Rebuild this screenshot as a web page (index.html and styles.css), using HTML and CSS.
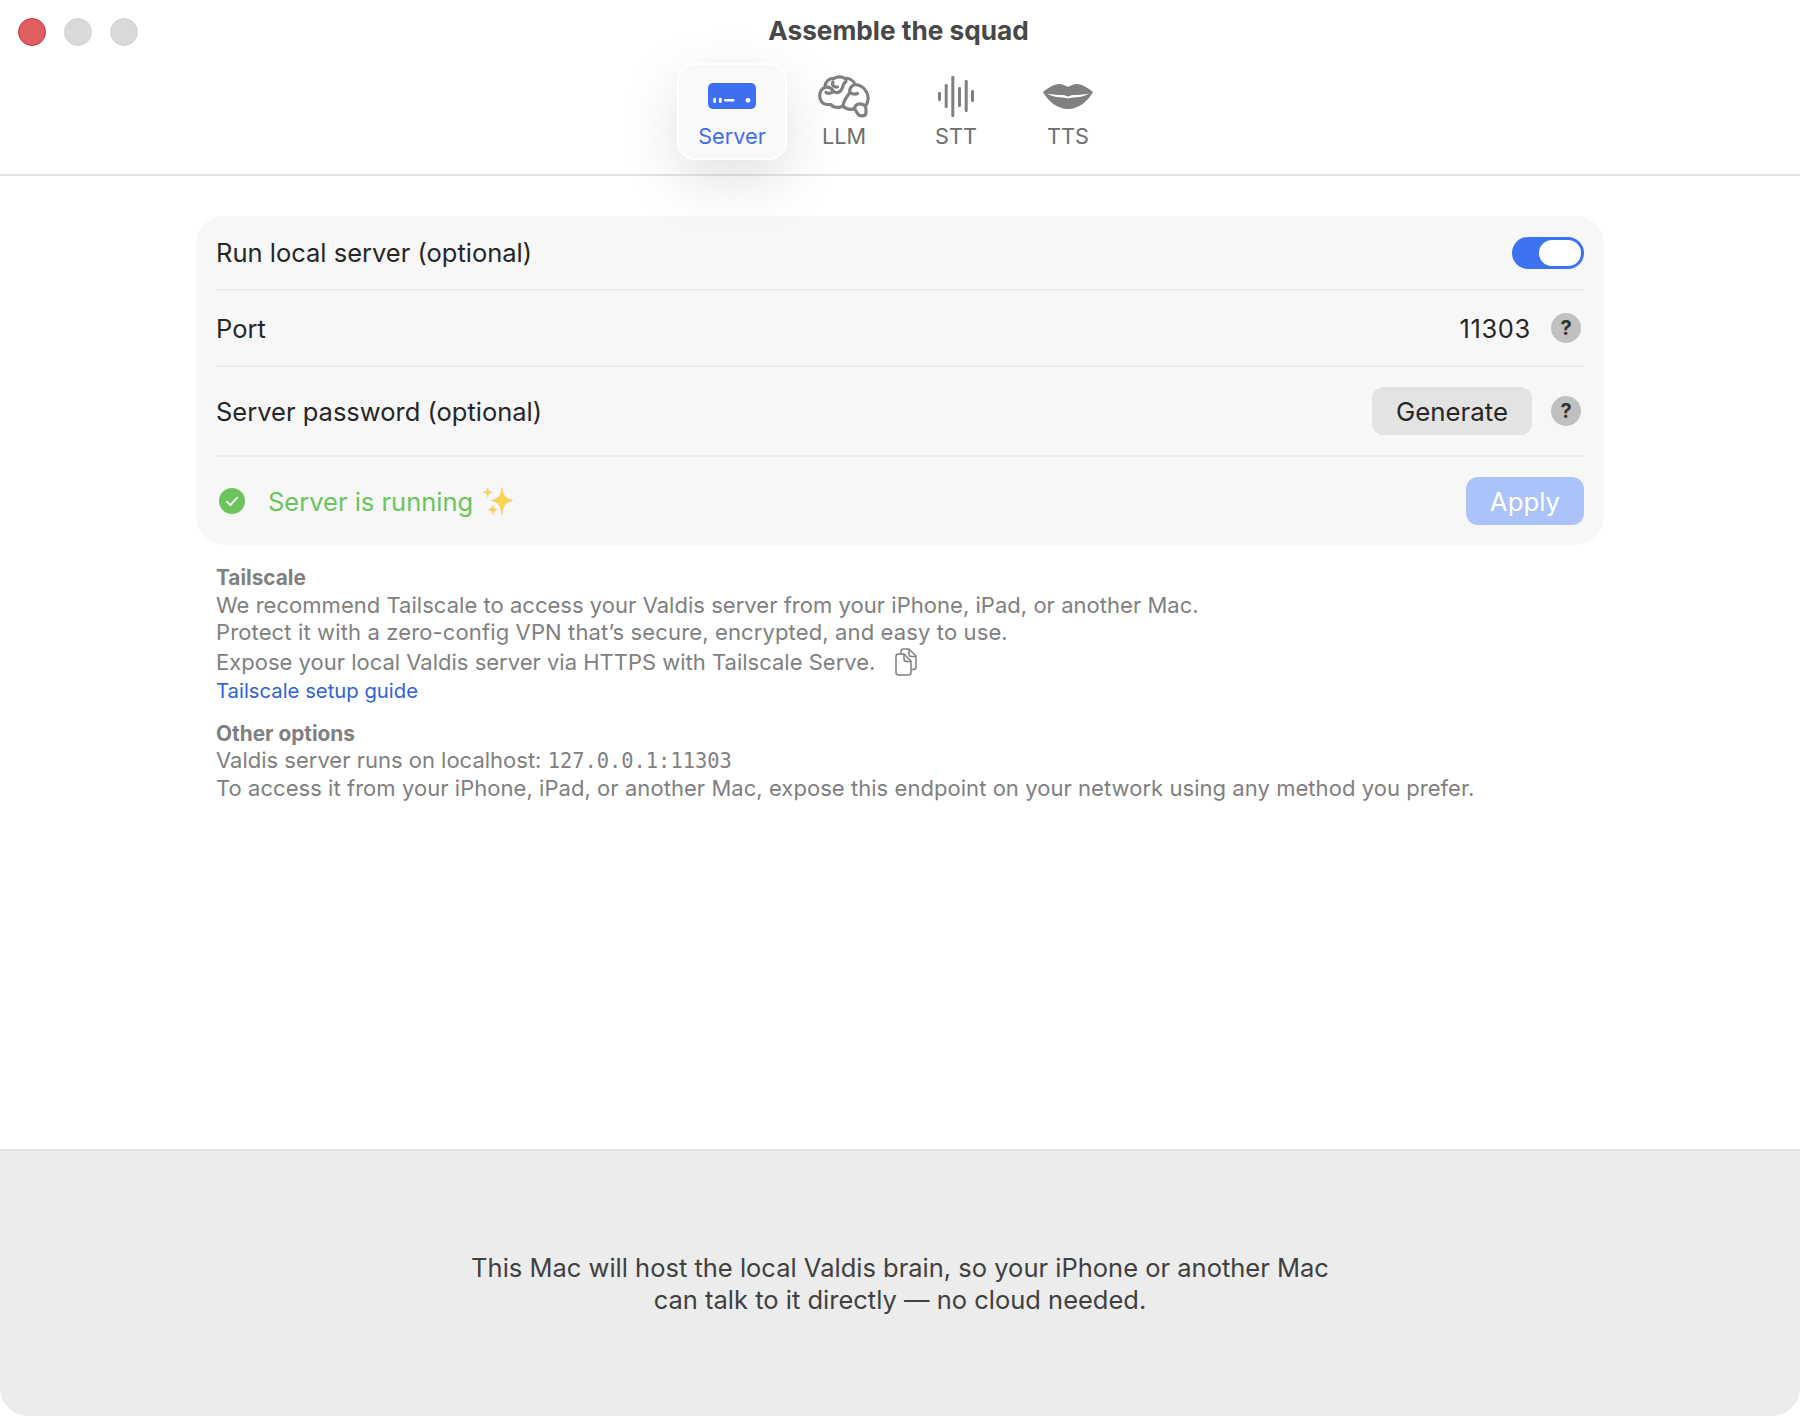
FILE: index.html
```html
<!DOCTYPE html>
<html lang="en">
<head>
<meta charset="utf-8">
<title>Assemble the squad</title>
<link rel="stylesheet" href="styles.css">
</head>
<body>
<div class="window">
  <header class="header">
    <div class="traffic">
      <span class="light light-close"></span>
      <span class="light"></span>
      <span class="light"></span>
    </div>
    <h1 class="title">Assemble the squad</h1>
    <nav class="tabs">
      <div class="tab tab-active">
        <svg class="tab-icon icon-server" width="48" height="26" viewBox="0 0 48 26"><rect width="48" height="26" rx="5" fill="#3d6ff0"/><g fill="#fff"><rect x="5.300" y="14.700" width="2.700" height="5.400" rx="1.300"/><rect x="11" y="14.700" width="2.700" height="5.400" rx="1.300"/><rect x="16" y="16" width="10.400" height="2.400" rx="1.200"/><circle cx="40" cy="17.300" r="2.400"/></g></svg>
        <span>Server</span>
      </div>
      <div class="tab">
        <svg class="tab-icon icon-brain" width="52" height="43" viewBox="0 0 52 43" fill="none" stroke="#808080" stroke-width="3.200" stroke-linecap="round" stroke-linejoin="round"><path d="M9 29.500C4 29.500 1.600 25 1.700 20.500 1.800 16 4 13.500 7 12.500 6.500 7.500 11 3 16 3.500 19 1.200 24 1.200 27 3.500 31.500 3 35.500 5.500 37 9.500 42 10 46.500 13 48.500 17 50.800 21 50.800 27 47.500 31 48 34 48.500 37.500 47.500 39.500 45.500 41.500 41.500 41.500 39.500 38.500L36.500 33.500C32.500 35 28 34 25 31 21 33 15.500 33 13 29.500z"/><path d="M7 12.500C10 11.500 14 13 15.500 16.500 13 18.500 10 18.500 8 17.500M15 7C13.500 10 15.500 12.500 19.500 12"/><path d="M28 6.500C24.500 8 25.500 13 22.500 16 20 18.500 18 18 15.500 16.500"/><path d="M37 9.500C33 10.500 31 14 32 17.500 30 20.500 26 24 25 31"/><path d="M32 17.500C34 19 37 19.500 39.500 18.500"/><path d="M36.500 33.500C37 29.500 41.500 27 47.500 31"/></svg>
        <span>LLM</span>
      </div>
      <div class="tab">
        <svg class="tab-icon icon-stt" width="36" height="41" viewBox="0 0 36 41" fill="#808080"><rect x="0" y="16" width="3" height="9" rx="1.200"/><rect x="6.700" y="8" width="3" height="24" rx="1.200"/><rect x="13.300" y="0" width="3" height="41" rx="1.200"/><rect x="20" y="11" width="3" height="20" rx="1.200"/><rect x="26.700" y="4" width="3" height="32" rx="1.200"/><rect x="33" y="14" width="3" height="12" rx="1.200"/></svg>
        <span>STT</span>
      </div>
      <div class="tab">
        <svg class="tab-icon icon-lips" width="50" height="25" viewBox="0 0 50 25"><path fill="#808080" d="M0 8C5 4 11 0 16 0 20 0 23 2 25 3 27 2 30 0 34 0 39 0 45 4 50 8 45 17 36 25 25 25 14 25 5 17 0 8z"/><path fill="#fff" d="M4 9.500C10 10.500 16 11 20 11 22 11 24 12.500 25 12.500 26 12.500 28 11 30 11 34 11 40 10.500 46 9.500 41 12.500 35 13.500 30 13.500 28 13.500 26 14.500 25 14.500 24 14.500 22 13.500 20 13.500 15 13.500 9 12.500 4 9.500z"/></svg>
        <span>TTS</span>
      </div>
    </nav>
  </header>
  <main class="main">
    <section class="card">
      <div class="row row-first">
        <span>Run local server (optional)</span>
        <span class="switch"><span class="knob"></span></span>
      </div>
      <div class="row row-port">
        <span>Port</span>
        <div class="controls"><span class="port-value">11303</span><span class="help">?</span></div>
      </div>
      <div class="row row-tall">
        <span>Server password (optional)</span>
        <div class="controls"><span class="btn">Generate</span><span class="help">?</span></div>
      </div>
      <div class="row row-status">
        <div class="status">
          <svg class="status-check" width="26" height="26" viewBox="0 0 26 26"><circle cx="13" cy="13" r="13" fill="#6cc45d"/><path d="M7.800 13.600l3.600 3.600 6.800-7.600" fill="none" stroke="#fff" stroke-width="1.800" stroke-linecap="round" stroke-linejoin="round"/></svg>
          <span class="status-text">Server is running</span>
          <svg width="30" height="28" viewBox="0 0 30 28"><g fill="#fcd54f" stroke="#f7bd4a" stroke-width=".6" stroke-linejoin="round"><path d="M19 .5C19.800 8 21.500 11.500 29.500 13.500 21.500 15.500 19.800 19 19 27.500 18.200 19 16.500 15.500 8.500 13.500 16.500 11.500 18.200 8 19 .5z"/><path d="M4.700 1C5.100 3.500 5.900 4.500 9 5.300 5.900 6.100 5.100 7.100 4.700 9.800 4.300 7.100 3.500 6.100.4 5.300 3.500 4.500 4.300 3.500 4.700 1z"/><path d="M9.700 18.400C10.100 20.900 10.900 21.900 14 22.700 10.900 23.500 10.100 24.500 9.700 27.200 9.300 24.500 8.500 23.500 5.400 22.700 8.500 21.900 9.300 20.900 9.700 18.400z"/></g></svg>
        </div>
        <span class="btn btn-apply">Apply</span>
      </div>
    </section>
    <section class="notes">
      <div class="note">
        <div class="note-title">Tailscale</div>
        <div class="note-line note-first">We recommend Tailscale to access your Valdis server from your iPhone, iPad, or another Mac.</div>
        <div class="note-line note-wide">Protect it with a zero-config VPN that’s secure, encrypted, and easy to use.</div>
        <div class="note-line note-copy">Expose your local Valdis server via HTTPS with Tailscale Serve.
          <svg class="copy" width="22" height="28" viewBox="0 0 22 28" fill="none" stroke="#808080" stroke-width="1.500" stroke-linejoin="round"><path d="M6 6V3.500C6 2 7 1 8.500 1H14l7 7v11c0 1.500-1 2.500-2.500 2.500H16"/><path d="M14 1v5c0 1.500 1 2.500 2.500 2.500H21"/><path d="M3.500 6H9l7 7v11.500c0 1.500-1 2.500-2.500 2.500h-10C2 27 1 26 1 24.500v-16C1 7 2 6 3.500 6z"/><path d="M9 6v5c0 1.500 1 2.500 2.500 2.500H16"/></svg>
        </div>
        <a class="note-link" href="#">Tailscale setup guide</a>
      </div>
      <div class="note">
        <div class="note-title">Other options</div>
        <div class="note-line">Valdis server runs on localhost: <span class="mono">127.0.0.1:11303</span></div>
        <div class="note-line note-slight">To access it from your iPhone, iPad, or another Mac, expose this endpoint on your network using any method you prefer.</div>
      </div>
    </section>
  </main>
  <footer class="footer">
    <p>This Mac will host the local Valdis brain, so your iPhone or another Mac<br>can talk to it directly — no cloud needed.</p>
  </footer>
</div>
</body>
</html>
```
FILE: styles.css
```css
* { box-sizing: border-box; }
html, body { margin: 0; padding: 0; background: #fff; }
body { font-family: Inter, "Liberation Sans", sans-serif; color: #262626; }
.window { width: 1800px; height: 1416px; display: flex; flex-direction: column; overflow: hidden; }
.header { position: relative; height: 176px; border-bottom: 2px solid #e4e4e4; display: flex; flex-direction: column; align-items: center; flex-shrink: 0; }
.traffic { position: absolute; left: 18px; top: 18px; display: flex; gap: 18px; }
.light { width: 28px; height: 28px; border-radius: 50%; background: #d9d9d9; border: 1px solid #d2d2d2; }
.light-close { background: #e05f63; border-color: #d8343c; }
.title { margin: 14px 0 0 -3px; font-size: 26.200px; line-height: 34px; font-weight: 700; color: #484848; }
.tabs { display: flex; gap: 2px; margin-top: 15px; position: relative; }
.tab { width: 110px; height: 97px; display: flex; flex-direction: column; align-items: center; justify-content: flex-end; padding-bottom: 8px; font-size: 21.700px; line-height: 28px; color: #6e6e6e; border-radius: 18px; border: 2px solid transparent; position: relative; }
.tab-icon { position: absolute; left: 50%; transform: translateX(-50%); }
.icon-server { top: 18px; }
.icon-brain { top: 10px; }
.icon-stt { top: 11px; }
.icon-lips { top: 19px; }
.tab-active { color: #3d6ff0; background: #f9f9f9; border-color: #fff; box-shadow: 0 20px 60px rgba(0,0,0,.12); }
.main { flex: 1; padding: 40px 196px 0; }
.card { background: #f7f7f7; border-radius: 28px; padding: 0 20px; }
.row { display: flex; align-items: center; justify-content: space-between; font-size: 25.500px; color: #262626; border-bottom: 2px solid #ececec; }
.row-first { height: 75px; }
.row-port { height: 76px; }
.row-tall { height: 90px; }
.row-status { height: 88px; border-bottom: 0; }
.controls { display: flex; align-items: center; gap: 19px; padding-right: 3px; }
.port-value { letter-spacing: .64px; margin-right: 1px; }
.switch { width: 72px; height: 32px; border-radius: 16px; background: #3d72f2; padding: 3px; display: flex; justify-content: flex-end; }
.knob { width: 42px; height: 26px; border-radius: 13px; background: #fff; }
.help { width: 30px; height: 30px; border-radius: 50%; background: #c0c0c0; color: #333; font-size: 20px; font-weight: 700; display: flex; align-items: center; justify-content: center; }
.btn { height: 48px; width: 160px; border-radius: 12px; background: #e3e3e3; display: flex; align-items: center; justify-content: center; font-size: 25.800px; }
.btn-apply { width: 118px; background: #abc3f8; color: #fff; }
.status { display: flex; align-items: center; }
.status-check { margin-left: 3px; }
.status-text { color: #6cc45d; margin: 0 10px 0 23px; }
.notes { padding: 19px 20px 0; color: #808080; font-size: 22px; line-height: 27.500px; }
.note { margin-bottom: 15px; }
.note-title { font-weight: 700; font-size: 20.800px; }
.note-first { letter-spacing: .03px; }
.note-wide { letter-spacing: .13px; }
.note-slight { letter-spacing: .05px; }
.note-copy { display: flex; align-items: center; gap: 20px; height: 27.500px; margin: 2px 0 1px; }
.copy { flex-shrink: 0; }
.note-link { color: #2f62d8; text-decoration: none; font-size: 20.300px; display: block; }
.mono { font-family: "DejaVu Sans Mono", monospace; font-size: 20.400px; line-height: 1; }
.footer { height: 267px; flex-shrink: 0; background: #ececec; border-top: 2px solid #e4e4e4; border-radius: 0 0 28px 28px; display: flex; align-items: center; justify-content: center; text-align: center; font-size: 25.500px; line-height: 32px; color: #404040; }
.footer p { margin: 0; }
```
